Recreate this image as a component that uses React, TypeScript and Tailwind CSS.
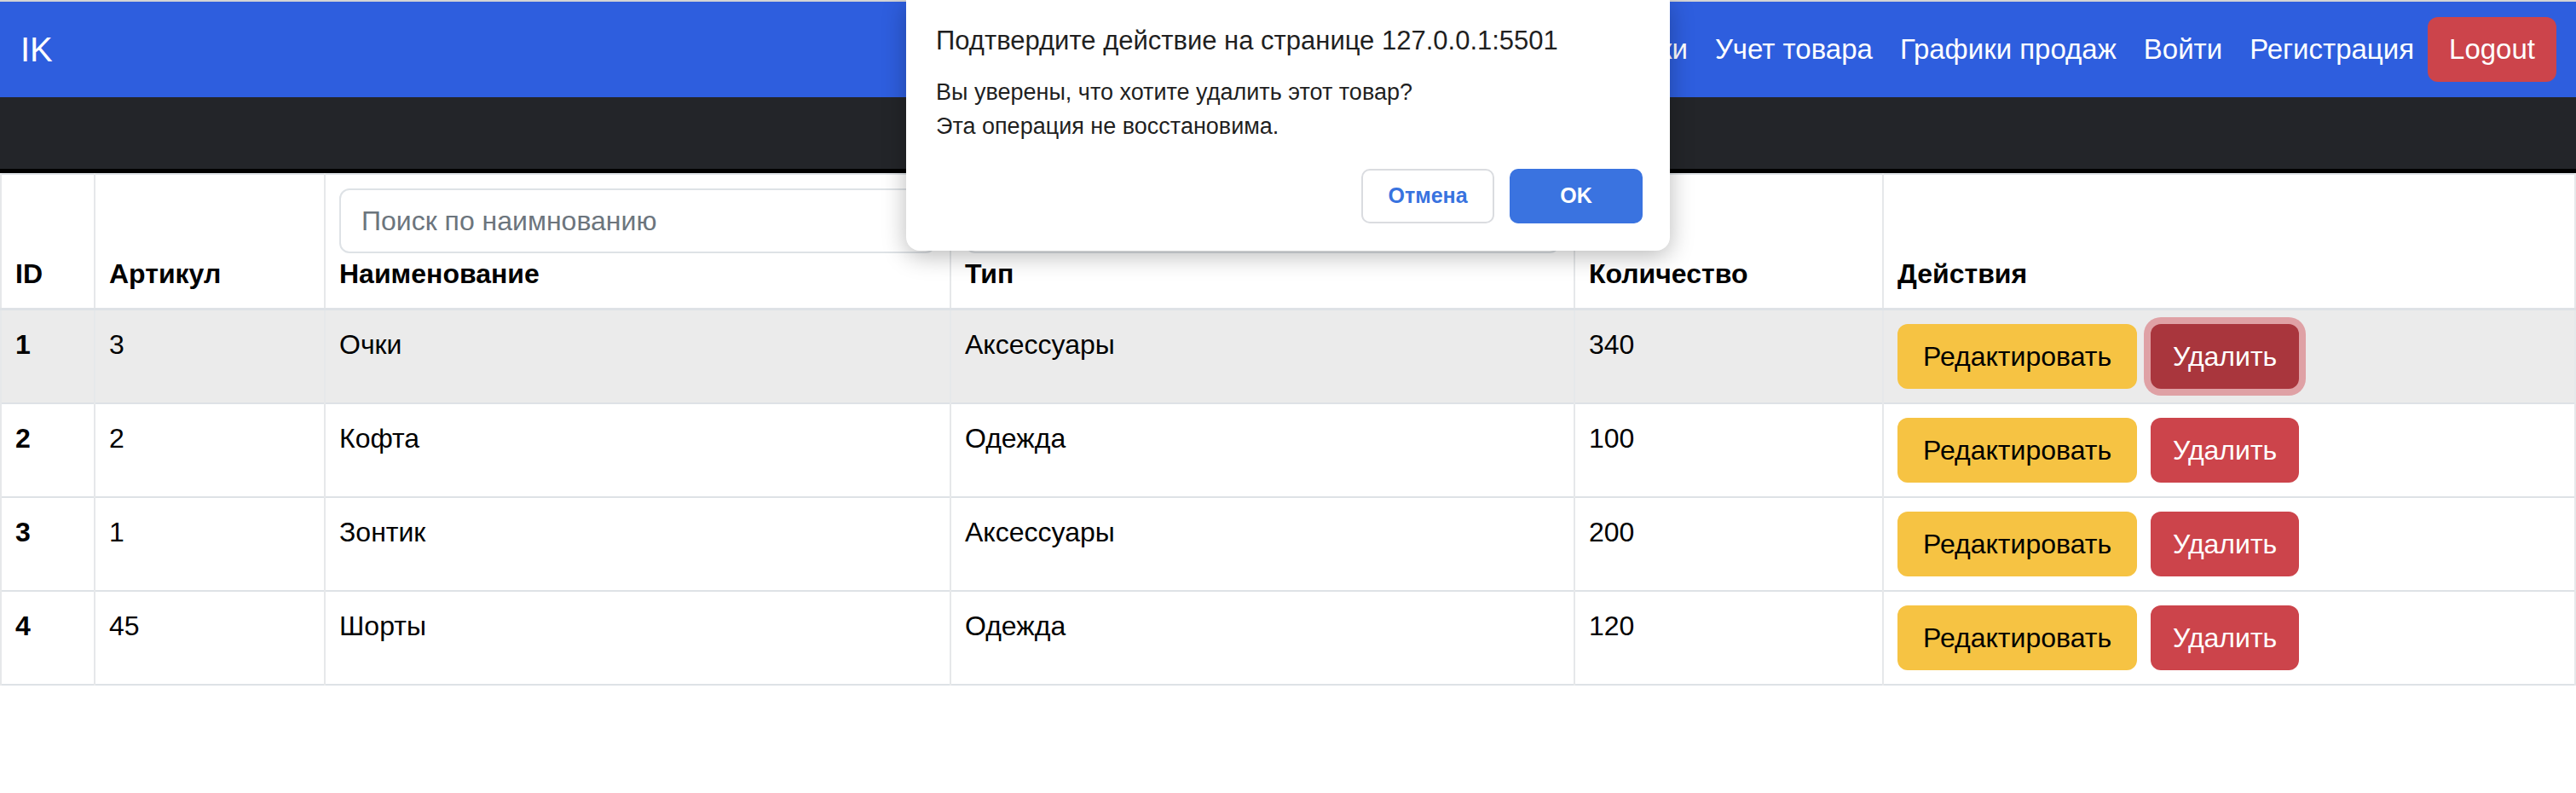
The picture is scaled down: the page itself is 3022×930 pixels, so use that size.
const products = [
  { id: 1, sku: "3", name: "Очки", type: "Аксессуары", qty: 340 },
  { id: 2, sku: "2", name: "Кофта", type: "Одежда", qty: 100 },
  { id: 3, sku: "1", name: "Зонтик", type: "Аксессуары", qty: 200 },
  { id: 4, sku: "45", name: "Шорты", type: "Одежда", qty: 120 },
];

const navLinks = ["Главная", "Поставки", "Учет товара", "Графики продаж", "Войти", "Регистрация"];

const Navbar = () => {
  return (
    <nav className="flex items-center justify-between h-[112px] pl-[24px] pr-[23px] bg-[#2e5ede]">
      <span className="text-[40px] text-white">IK</span>
      <div className="flex items-center">
        {navLinks.map((link) => (
          <a key={link} className="px-[16px] text-[33px] text-white">
            {link}
          </a>
        ))}
        <button className="h-[76px] px-[25px] rounded-[12px] bg-[#cc444b] text-[33px] text-white">
          Logout
        </button>
      </div>
    </nav>
  );
};

const ConfirmDialog = () => {
  return (
    <div className="absolute top-0 left-[1063px] w-[896px] h-[294px] bg-white rounded-b-[16px] shadow-[0_6px_28px_rgba(0,0,0,0.28)] pl-[35px] pr-[32px] pt-[28px] flex flex-col">
      <p className="text-[31px] leading-[40px] text-[#1f1f1f]">
        Подтвердите действие на странице 127.0.0.1:5501
      </p>
      <p className="mt-[20px] text-[27px] leading-[40px] text-[#1f1f1f]">
        Вы уверены, что хотите удалить этот товар?
      </p>
      <p className="text-[27px] leading-[40px] text-[#1f1f1f]">Эта операция не восстановима.</p>
      <div className="flex justify-end gap-[18px] mt-[30px]">
        <button className="w-[156px] h-[64px] rounded-[10px] border-2 border-[#dadce0] bg-white text-[25px] font-semibold text-[#3873df]">
          Отмена
        </button>
        <button className="w-[156px] h-[64px] rounded-[10px] bg-[#3a73e0] text-[25px] font-semibold text-white">
          OK
        </button>
      </div>
    </div>
  );
};

export default function App() {
  return (
    <div className="relative w-[3022px] h-[930px] bg-white font-['Liberation_Sans',Arial,sans-serif] text-black overflow-hidden">
      <div className="h-[2px] bg-[#d4d4d4]" />
      <Navbar />
      <div className="h-[84px] bg-[#232529]" />
      <div className="h-[5px] bg-black" />
      <table className="w-full border-collapse table-fixed">
        <colgroup>
          <col className="w-[110px]" />
          <col className="w-[270px]" />
          <col className="w-[734px]" />
          <col className="w-[732px]" />
          <col className="w-[362px]" />
          <col />
        </colgroup>
        <thead>
          <tr className="border-t-2 border-b-[3px] border-[#dee2e6] text-left align-bottom">
            <th className="p-[16px] border-x-2 border-[#e6e8ea] text-[32px] leading-[48px] font-bold">ID</th>
            <th className="p-[16px] border-x-2 border-[#e6e8ea] text-[32px] leading-[48px] font-bold">Артикул</th>
            <th className="p-[16px] border-x-2 border-[#e6e8ea] text-[32px] leading-[48px] font-bold">
              <input
                className="block w-full h-[76px] px-[24px] rounded-[12px] border-2 border-[#dee2e6] text-[32px] font-normal placeholder:text-[#6c757d] outline-none"
                placeholder="Поиск по наимнованию"
              />
              Наименование
            </th>
            <th className="p-[16px] border-x-2 border-[#e6e8ea] text-[32px] leading-[48px] font-bold">
              <input
                className="block w-full h-[76px] px-[24px] rounded-[12px] border-2 border-[#dee2e6] text-[32px] font-normal placeholder:text-[#6c757d] outline-none"
                placeholder="Все типы"
              />
              Тип
            </th>
            <th className="p-[16px] border-x-2 border-[#e6e8ea] text-[32px] leading-[48px] font-bold">Количество</th>
            <th className="p-[16px] border-x-2 border-[#e6e8ea] text-[32px] leading-[48px] font-bold">Действия</th>
          </tr>
        </thead>
        <tbody>
          {products.map((p, index) => (
            <tr
              key={p.id}
              className={`border-b-2 border-[#dee2e6] align-top text-[32px] leading-[48px] ${
                index === 0 ? "bg-[#ebebeb]" : "bg-white"
              }`}
            >
              <td className="p-[16px] border-x-2 border-[#e6e8ea] font-bold">{p.id}</td>
              <td className="p-[16px] border-x-2 border-[#e6e8ea]">{p.sku}</td>
              <td className="p-[16px] border-x-2 border-[#e6e8ea]">{p.name}</td>
              <td className="p-[16px] border-x-2 border-[#e6e8ea]">{p.type}</td>
              <td className="p-[16px] border-x-2 border-[#e6e8ea]">{p.qty}</td>
              <td className="p-[16px] border-x-2 border-[#e6e8ea]">
                <div className="flex gap-[16px]">
                  <button className="h-[76px] px-[30px] rounded-[12px] bg-[#f6c343] text-black">
                    Редактировать
                  </button>
                  <button
                    className={`h-[76px] px-[26px] rounded-[12px] text-white ${
                      index === 0 ? "bg-[#a9363d] ring-[8px] ring-[#dfa1a5]" : "bg-[#cc444b]"
                    }`}
                  >
                    Удалить
                  </button>
                </div>
              </td>
            </tr>
          ))}
        </tbody>
      </table>
      <ConfirmDialog />
    </div>
  );
}
